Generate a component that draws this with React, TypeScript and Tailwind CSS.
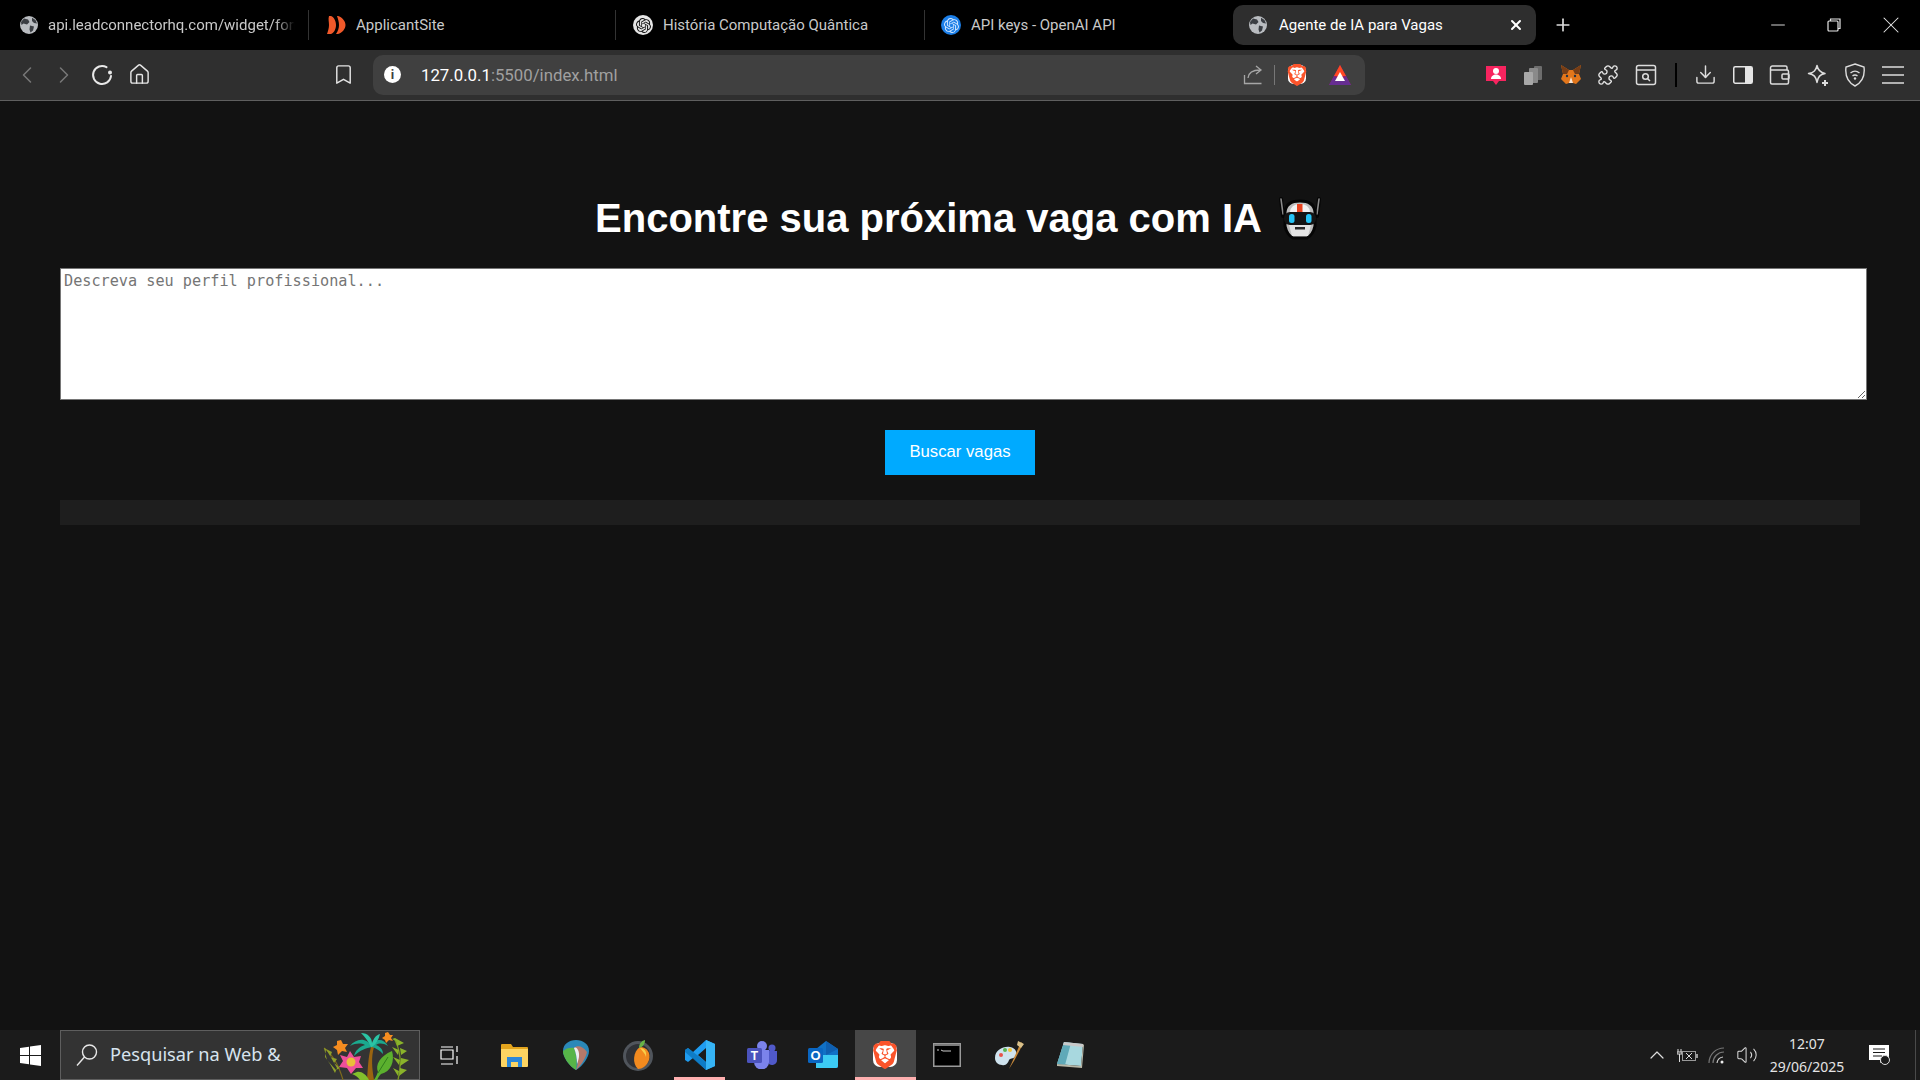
import { ChevronLeft, ChevronRight, Plus, X, Minus, Home, Bookmark, Puzzle, Download, ChevronUp, Volume2 } from "lucide-react";
import { SiBrave, SiOpenai } from "react-icons/si";
import type { ReactNode } from "react";

function Globe({ size = 18 }: { size?: number }) {
  return (
    <svg width={size} height={size} viewBox="0 0 18 18" className="shrink-0">
      <circle cx="9" cy="9" r="9" fill="#b9bcc0" />
      <path d="M4 2.500 8 3.500 9.500 6 7 8.500 3.500 7.500 1.500 9 1 6ZM10 9.500 14 10.500 13 14.500 10.500 16.500 9.500 13.500ZM12 1.800 15.500 4 17 7.500 14 7 12 5Z" fill="#3a3d42" />
    </svg>
  );
}

function BraveLogo({ size = 20 }: { size?: number }) {
  return (
    <span className="relative flex shrink-0 items-center justify-center" style={{ width: size, height: size }}>
      <span className="absolute inset-[8%] rounded-[30%] bg-white" />
      <SiBrave size={size} color="#fb542b" className="relative" />
    </span>
  );
}

function OpenAiRound({ bg, fg }: { bg: string; fg: string }) {
  return (
    <span className="flex h-[20px] w-[20px] shrink-0 items-center justify-center rounded-full" style={{ background: bg }}>
      <SiOpenai size={15} color={fg} />
    </span>
  );
}

function ApplicantLogo() {
  return (
    <svg width="20" height="20" viewBox="0 0 20 20" className="shrink-0">
      <path d="M3 1h2c3 1 5 5 5 9s-2 8-5 9H1c1-3 2-6 2-9S2 4 3 1Z" fill="#f0592a" />
      <path d="M11 1h1c4 1 7.500 5 7.500 9s-3.500 8-7.500 9h-2c2-3 3-6 3-9s-1-6-2-9Z" fill="#f0592a" />
    </svg>
  );
}

function Tab({ w, pl, icon, title, fade }: { w: string; pl: string; icon: ReactNode; title: string; fade?: string }) {
  return (
    <div className={`flex h-[30px] items-center gap-[10px] border-r border-[#333] pr-[13px] ${w} ${pl}`}>
      {icon}
      <span className={`overflow-hidden whitespace-nowrap text-[15px] text-[#c9c9c9] ${fade ?? ""}`}>{title}</span>
    </div>
  );
}

function Cell({ w = "w-[37.500px]", children }: { w?: string; children: ReactNode }) {
  return <div className={`flex h-full shrink-0 items-center justify-center ${w}`}>{children}</div>;
}

function TabBar() {
  return (
    <div className="flex h-[50px] shrink-0 items-center bg-black font-['Roboto',sans-serif]">
      <Tab w="w-[309px]" pl="pl-[20px]" icon={<Globe />} title="api.leadconnectorhq.com/widget/form" fade="[mask-image:linear-gradient(to_right,black_92%,transparent)]" />
      <Tab w="w-[307px]" pl="pl-[17px]" icon={<ApplicantLogo />} title="ApplicantSite" />
      <Tab w="w-[309px]" pl="pl-[17px]" icon={<OpenAiRound bg="#e5e5e5" fg="#111" />} title="História Computação Quântica" />
      <div className="flex h-[30px] w-[308px] items-center gap-[10px] pl-[16px]">
        <OpenAiRound bg="#1c7fe8" fg="#d5e8ff" />
        <span className="whitespace-nowrap text-[15px] text-[#c9c9c9]">API keys - OpenAI API</span>
      </div>
      <div className="flex h-[40px] w-[303px] items-center rounded-[10px] bg-[#2e2e2e] pl-[16px] pr-[12px]">
        <Globe />
        <span className="ml-[12px] flex-1 whitespace-nowrap text-[15px] text-white">Agente de IA para Vagas</span>
        <X size={16} color="#fff" strokeWidth={3} />
      </div>
      <Plus size={20} color="#ddd" strokeWidth={2} className="ml-[17px]" />
      <div className="ml-auto flex h-full items-center">
        <Cell w="w-[57px]"><Minus size={22} color="#e8e8e8" strokeWidth={1} /></Cell>
        <Cell w="w-[56px]">
          <svg width="14" height="14" viewBox="0 0 14 14" fill="none" stroke="#e8e8e8" strokeWidth="1.200">
            <rect x="1" y="3" width="10" height="10" rx="1" />
            <path d="M3.500 3V1h9.500v9.500h-2" />
          </svg>
        </Cell>
        <Cell w="w-[58px]"><X size={28} color="#e8e8e8" strokeWidth={0.9} /></Cell>
      </div>
    </div>
  );
}

function Reload() {
  return (
    <svg width="22" height="22" viewBox="0 0 22 22" fill="none" stroke="#e8e8e8" strokeWidth="2">
      <path d="M15.500 3.200A9 9 0 1 0 20 12" strokeLinecap="round" />
      <circle cx="19" cy="8.500" r="2" fill="#e8e8e8" stroke="none" />
    </svg>
  );
}

function Toolbar() {
  return (
    <div className="flex h-[51px] shrink-0 items-center border-b border-[#5f5f5f] bg-[#2f2f2f] pb-px font-['Roboto',sans-serif]">
      <div className="flex h-full w-[373px] shrink-0 items-center pl-[8px]">
        <Cell><ChevronLeft size={28} color="#777" strokeWidth={1.300} /></Cell>
        <Cell><ChevronRight size={28} color="#777" strokeWidth={1.300} /></Cell>
        <Cell><Reload /></Cell>
        <Cell><Home size={23} color="#e5e5e5" strokeWidth={1.500} /></Cell>
        <Cell w="w-[166px]"><span /></Cell>
        <Cell w="w-[38px]"><Bookmark size={23} color="#e5e5e5" strokeWidth={1.500} /></Cell>
      </div>
      <div className="flex h-[40px] w-[992px] shrink-0 items-center rounded-[10px] bg-[#404040] pl-[11px] pr-[13px]">
        <span className="flex h-[17px] w-[17px] items-center justify-center rounded-full bg-white text-[13px] font-bold text-[#404040]">i</span>
        <span className="ml-[20px] pt-[2px] text-[16.800px] text-white">127.0.0.1<span className="text-[#a0a0a0]">:5500/index.html</span></span>
        <div className="ml-auto flex items-center gap-[11px]">
          <svg width="20" height="20" viewBox="0 0 20 20" fill="none" stroke="#a6a6a6" strokeWidth="1.300">
            <path d="M1.500 10v8.500h17M5 13c.5-5 4-8 12-8M13 1l5 4-5 4" />
          </svg>
          <span className="h-[20px] w-px bg-[#777]" />
          <BraveLogo size={22} />
          <svg width="24" height="22" viewBox="0 0 24 22" className="ml-[9px]">
            <path d="M12 1 23 21H1Z" fill="#9e1f63" />
            <path d="M12 1 18 12H6Z" fill="#ff4724" />
            <path d="M6 12 1 21h22l-5-9-6 5Z" fill="#662d91" />
            <path d="M12 8 17 17H7Z" fill="#fff" />
          </svg>
        </div>
      </div>
      <div className="ml-[112px] flex h-full items-center">
        <Cell>
          <svg width="22" height="22" viewBox="0 0 22 22">
            <path d="M1 2h20v15h-7l-3 4-3-4H1Z" fill="#f7245f" />
            <circle cx="11" cy="7" r="3" fill="#fff" />
            <path d="M6 15c0-6 10-6 10 0Z" fill="#fff" />
          </svg>
        </Cell>
        <Cell>
          <svg width="20" height="20" viewBox="0 0 20 20">
            <rect x="11" y="1" width="8" height="14" rx="1" fill="#6d6d6d" />
            <rect x="6" y="3" width="9" height="15" rx="1" fill="#8a8a8a" />
            <rect x="1" y="7" width="9" height="13" rx="1" fill="#a8a8a8" />
          </svg>
        </Cell>
        <Cell>
          <svg width="22" height="22" viewBox="0 0 22 22">
            <path d="M1 1 9 6h4l8-5-2 9 2 5-5 5-3-1H9l-3 1-5-5 2-5Z" fill="#e2761b" />
            <path d="M1 1 9 6 7 10 3 10ZM21 1 13 6l2 4 4 0Z" fill="#763d16" />
            <path d="M9 19h4l-2-6Z" fill="#f6e4d4" />
            <circle cx="7" cy="12" r="1.200" fill="#233447" />
            <circle cx="15" cy="12" r="1.200" fill="#233447" />
          </svg>
        </Cell>
        <Cell><Puzzle size={22} color="#e5e5e5" strokeWidth={1.500} /></Cell>
        <Cell>
          <svg width="22" height="22" viewBox="0 0 22 22" fill="none" stroke="#ddd" strokeWidth="1.500">
            <rect x="1.500" y="1.500" width="19" height="19" rx="2" />
            <path d="M1.500 6h19" />
            <circle cx="10.500" cy="12.500" r="2.800" />
            <path d="M12.500 14.500 15 17" />
          </svg>
        </Cell>
        <Cell w="w-[22px]"><span className="h-[24px] w-[2px] bg-black" /></Cell>
        <Cell><Download size={23} color="#ddd" strokeWidth={1.500} /></Cell>
        <Cell>
          <svg width="22" height="22" viewBox="0 0 22 22">
            <rect x="1.750" y="2.750" width="18.500" height="16.500" rx="1.500" fill="none" stroke="#e5e5e5" strokeWidth="1.500" />
            <rect x="13" y="3" width="7" height="16" fill="#e5e5e5" />
          </svg>
        </Cell>
        <Cell>
          <svg width="22" height="22" viewBox="0 0 22 22" fill="none" stroke="#ddd" strokeWidth="1.500">
            <path d="M18 6V3.500A1.500 1.500 0 0 0 16.500 2H3.500A2 2 0 0 0 1.500 4v14.500A1.500 1.500 0 0 0 3 20h15a1.500 1.500 0 0 0 1.500-1.500V7.500A1.500 1.500 0 0 0 18 6H2" />
            <rect x="13" y="10" width="7" height="5" rx="1" />
          </svg>
        </Cell>
        <Cell>
          <svg width="24" height="24" viewBox="0 0 24 24" fill="none" stroke="#ddd" strokeWidth="1.500">
            <path d="M11 2.500c1 5 3 7 8 8-5 1-7 3-8 9-1-6-3-8-8.500-9 5.500-1 7.500-3 8.500-8Z" strokeLinejoin="round" />
            <path d="M19 17v6M16 20h6" strokeWidth="2" />
          </svg>
        </Cell>
        <Cell>
          <svg width="22" height="24" viewBox="0 0 22 24" fill="none" stroke="#ddd" strokeWidth="1.400">
            <path d="M11 1 20 4c1 8-1 15-9 19C3 19 1 12 2 4Z" />
            <path d="M6.500 10c3-2.500 6-2.500 9 0M8.500 12.800c2-1.300 3-1.300 5 0" />
            <circle cx="11" cy="15.500" r="1.200" fill="#ddd" stroke="none" />
          </svg>
        </Cell>
        <Cell>
          <svg width="22" height="20" viewBox="0 0 22 20" stroke="#ddd" strokeWidth="1.500">
            <path d="M0 2h22M0 10h22M0 18h22" />
          </svg>
        </Cell>
      </div>
    </div>
  );
}

function RobotEmoji() {
  return (
    <svg width="44" height="44" viewBox="0 0 44 44" className="ml-[16px] shrink-0">
      <path d="M3 3 5 20M41 3 39 20" stroke="#050505" strokeWidth="4" strokeLinecap="round" />
      <path d="M3 3 5 18M41 3 39 18" stroke="#8a8a8a" strokeWidth="1.600" strokeLinecap="round" />
      <path d="M7 16Q8 5 22 5T37 16V30Q35 39 29 42H15Q9 39 7 30Z" fill="#bdbdbd" stroke="#050505" strokeWidth="3" />
      <path d="M12 16Q13 8 22 8T32 16Z" fill="#f2f2f2" />
      <rect x="19" y="8" width="5.500" height="8" fill="#e8431f" />
      <rect x="6" y="16" width="32" height="13" rx="6" fill="#141414" />
      <rect x="11" y="18" width="5.500" height="9" rx="2.500" fill="#25c3f5" />
      <rect x="28" y="18" width="5.500" height="9" rx="2.500" fill="#25c3f5" />
      <path d="M11 29H33L30 40H14Z" fill="#e2e2e2" />
      <rect x="17" y="31" width="10" height="2.500" fill="#2a2a2a" />
    </svg>
  );
}

function TropicalArt() {
  return (
    <svg width="90" height="50" viewBox="0 0 90 50" className="shrink-0">
      <path d="M2 18C10 24 17 36 21 50" stroke="#7d6a1c" strokeWidth="1.200" fill="none" />
      <path d="M2 18 10 22 8 27 15 29 12 33 18 38 14 40 5 30ZM4 19 3 27 8 34 13 43 15 38Z" fill="#8fa12a" />
      <path d="M45 50C46 38 46 28 49 17L52 17C49 28 50 38 52 50Z" fill="#9a6410" />
      <path d="M50 17C45 7 34 8 28 16 34 13 39 13 43 15 37 17 33 21 32 26 38 20 44 18 50 17Z" fill="#1ba98e" />
      <path d="M50 17C53 8 61 8 66 16 61 13 57 13 54 15 59 17 61 20 61 24 57 20 54 18 50 17Z" fill="#1ba98e" />
      <path d="M49 17C46 11 43 7 39 3 46 3 50 8 50 13 52 8 54 5 58 4 57 9 54 14 50 17Z" fill="#2bc4a5" />
      <path d="M35 42C39 41 44 44 47 50H38C36 47 33 45 30 44Z" fill="#82c02c" />
      <path d="M28 21 32 27 39 26 37 32 41 38 34 38 29 44 25 38 17 37 21 31 18 25 25 27Z" fill="#ef4f9a" />
      <circle cx="29" cy="32" r="4.500" fill="#e9bd3a" />
      <path d="M19 10 21 14 26 14 23 18 25 22 20 21 16 25 15 20 11 17 15 15 15 11Z" fill="#f58c20" />
      <path d="M66 2 68 5 71 5 69 8 71 11 67 10 64 13 63 10 60 8 63 6 63 3Z" fill="#f58c20" />
      <path d="M52 50C54 47 55 44 56 42 53 35 58 26 70 21 73 31 69 42 59 44 57 46 56 48 55 50Z" fill="#5bb02e" />
      <path d="M56 43 66 27" stroke="#2f7d1c" strokeWidth="1" />
      <path d="M76 50C79 38 80 24 73 10" stroke="#7a9a22" strokeWidth="1.300" fill="none" />
      <path d="M74 11 70 9 73 8 82 13 75 16ZM77 20 70 17 76 25ZM78 18 85 21 79 25ZM78 30 71 27 77 35ZM79 28 87 30 78 36ZM77 41 71 38 76 46ZM78 38 85 40 77 46Z" fill="#8ab32a" />
    </svg>
  );
}

function Taskbar() {
  return (
    <div className="flex h-[50px] shrink-0 items-stretch bg-[#1b1b1b] font-['Noto_Sans',sans-serif]">
      <div className="flex w-[60px] shrink-0 items-center justify-center">
        <svg width="21" height="21" viewBox="0 0 21 21" fill="#fff">
          <path d="M0 3 9 1.700V10H0ZM10 1.500 21 0V10H10ZM0 11H9V19.300L0 18ZM10 11H21V21L10 19.500Z" />
        </svg>
      </div>
      <div className="flex w-[360px] shrink-0 items-center border border-[#5e5e5e] bg-[#333] pl-[14px] pr-[7px]">
        <svg width="24" height="24" viewBox="0 0 24 24" fill="none" stroke="#e8e8e8" strokeWidth="1.400">
          <circle cx="14.500" cy="9" r="7" />
          <path d="M9.500 14 2 22.500" />
        </svg>
        <span className="ml-[11px] flex-1 text-[18.200px] text-[#d7e3ee]">Pesquisar na Web &amp;</span>
        <TropicalArt />
      </div>
      <div className="flex w-[63.500px] shrink-0 items-center justify-center pr-[3px]">
        <svg width="20" height="20" viewBox="0 0 20 20" fill="none" stroke="#fff" strokeWidth="1.200">
          <path d="M1 2h12M1 19h12M1 5h12v9H1ZM17 1v6M17 11v8" />
        </svg>
      </div>
      <TaskIcon>
        <svg width="27" height="25" viewBox="0 0 27 25">
          <path d="M0 2a1 1 0 0 1 1-1h9l2 3h14a1 1 0 0 1 1 1v2H0Z" fill="#e3a41d" />
          <path d="M0 6h27v17a1 1 0 0 1-1 1H1a1 1 0 0 1-1-1Z" fill="#fcd462" />
          <path d="M6 24V14h15v10h-4v-5h-7v5Z" fill="#2b87d8" />
        </svg>
      </TaskIcon>
      <TaskIcon>
        <svg width="26" height="30" viewBox="0 0 26 30">
          <path d="M13 30C6 26 0 17 0 11 0 4 6 0 13 0s13 4 13 11c0 6-6 15-13 19Z" fill="#2b88b8" />
          <path d="M13 30C6 26 0 17 0 11c3-3 8-4 11-3 3 8 3 16 2 22Z" fill="#57b548" />
          <path d="M13 30C17 27 23 18 24 12 20 6 14 5 11 8c4 6 5 15 2 22Z" fill="#b5796a" />
          <path d="M11 8c2 5 3 10 3 16 2-5 3-10 1-14-1-2-2-3-4-2Z" fill="#eee" />
        </svg>
      </TaskIcon>
      <TaskIcon>
        <svg width="30" height="32" viewBox="0 0 30 32">
          <circle cx="15" cy="17" r="15" fill="#50555c" />
          <circle cx="15" cy="17" r="12" fill="#2f3136" />
          <path d="M17 8C24 8 28 14 26 21 24 27 19 30 15 30 9 25 10 12 17 8Z" fill="#f28a1f" />
          <path d="M17 9C21 9 24 12 23 18 22 14 19 12 17 9Z" fill="#f8cf4a" />
          <path d="M16 9C16 5 18 2 22 1 22 5 20 8 16 9Z" fill="#68b346" />
        </svg>
      </TaskIcon>
      <TaskIcon active="w-[51px]">
        <svg width="30" height="30" viewBox="0 0 30 30">
          <path d="M21 0 30 4V26L21 30 8 18 3 22 0 20V10L3 8 8 12ZM21 8 13 15 21 22Z" fill="#1f9cf0" />
          <path d="M21 0 30 4V26L21 30Z" fill="#36b4f5" />
          <path d="M3 8 21 22V30L0 12V10Z" fill="#0a71b9" opacity=".75" />
        </svg>
      </TaskIcon>
      <TaskIcon>
        <svg width="30" height="28" viewBox="0 0 30 28">
          <circle cx="15" cy="5" r="5" fill="#7b83eb" />
          <circle cx="25" cy="7" r="3.500" fill="#5059c9" />
          <path d="M21 10h9v9a5 5 0 0 1-9 3Z" fill="#5059c9" />
          <path d="M7 9h15v12a7.500 7.500 0 0 1-15 0Z" fill="#7b83eb" />
          <rect x="0" y="7" width="15" height="15" rx="1.500" fill="#4b53bc" />
          <text x="7.500" y="18.500" textAnchor="middle" fontSize="12" fontWeight="700" fill="#fff" fontFamily="Liberation Sans">T</text>
        </svg>
      </TaskIcon>
      <TaskIcon>
        <svg width="30" height="28" viewBox="0 0 30 28">
          <path d="M18 0 30 8V25a2 2 0 0 1-2 2H8V8Z" fill="#1171c6" />
          <path d="M8 14h22v11a2 2 0 0 1-2 2H8Z" fill="#3ccbf4" />
          <path d="M18 0 30 8 18 14Z" fill="#0f5fb0" />
          <rect x="0" y="7" width="15" height="15" rx="1.500" fill="#0a66c2" />
          <text x="7.500" y="19" textAnchor="middle" fontSize="13" fontWeight="700" fill="#fff" fontFamily="Liberation Sans">O</text>
        </svg>
      </TaskIcon>
      <TaskIcon active="w-[61px]" highlight>
        <BraveLogo size={28} />
      </TaskIcon>
      <TaskIcon>
        <svg width="28" height="24" viewBox="0 0 28 24">
          <rect x=".750" y=".750" width="26.500" height="22.500" fill="#000" stroke="#9a9a9a" strokeWidth="1.500" />
          <rect x="1" y="1" width="26" height="2" fill="#7a7a7a" />
          <path d="M4 7h2M8 7l2 1h8" stroke="#ccc" strokeWidth="1" />
        </svg>
      </TaskIcon>
      <TaskIcon>
        <svg width="30" height="30" viewBox="0 0 30 30">
          <path d="M1 18C1 10 9 6 16 7c6 1 8 6 5 10-2 2-5 1-6 3-1 3-3 6-7 5-4 0-7-3-7-7Z" fill="#cfe3ee" />
          <circle cx="7" cy="15" r="2" fill="#e8534a" />
          <circle cx="11" cy="10" r="2" fill="#5ab553" />
          <circle cx="16" cy="10" r="2" fill="#f3c53a" />
          <path d="M27 2 19 20 15 29 20 21 29 4Z" fill="#c8893a" />
          <path d="M24 1 30 4 27 8 23 5Z" fill="#d9c08a" />
        </svg>
      </TaskIcon>
      <TaskIcon>
        <svg width="27" height="28" viewBox="0 0 27 28">
          <path d="M7 1 26 3 24 25 0 23Z" fill="#a8d8df" />
          <path d="M0 23 7 1 14 2 8 24Z" fill="#5fa9b8" />
          <path d="M7 1 26 3 26 6 6 4Z" fill="#c9c9c9" />
          <path d="M24 25 26 3 27 4 25 27 0 25V23Z" fill="#b8b8a8" />
        </svg>
      </TaskIcon>
      <div className="flex-1" />
      <div className="flex shrink-0 items-center text-[#e4e4e4]">
        <Cell w="w-[30px]"><ChevronUp size={24} color="#ddd" strokeWidth={1.200} /></Cell>
        <Cell w="w-[30px]">
          <svg width="21" height="15" viewBox="0 0 21 15" fill="none" stroke="#ddd" strokeWidth="1">
            <path d="M1 1v3M4 1v3M0 4h5v2H0ZM2.500 6v8" />
            <rect x="5.500" y="3.500" width="13" height="9" stroke="#999" />
            <path d="M19 6h2v4h-2Z" fill="#999" stroke="none" />
            <path d="M9 5l6 6M15 5l-6 6" />
          </svg>
        </Cell>
        <Cell w="w-[30px]">
          <svg width="18" height="17" viewBox="0 0 18 17" fill="none" stroke="#777" strokeWidth="1.200">
            <path d="M1 16A15 15 0 0 1 16 1M5 16A11 11 0 0 1 16 5" />
            <path d="M9 16A7 7 0 0 1 15 10" stroke="#ccc" />
            <circle cx="14" cy="15" r="1.500" fill="#eee" stroke="none" />
          </svg>
        </Cell>
        <Cell w="w-[30px]"><Volume2 size={22} color="#ddd" strokeWidth={1.100} /></Cell>
        <div className="flex w-[90px] shrink-0 flex-col items-center text-[14px] leading-[23px]">
          <span>12:07</span>
          <span>29/06/2025</span>
        </div>
        <Cell w="w-[54px]">
          <svg width="21" height="20" viewBox="0 0 21 20">
            <path d="M0 0h20v15H14l-3 3v-3H0Z" fill="#fff" />
            <path d="M4 4h12M4 7.500h12M4 11h9" stroke="#1b1b1b" strokeWidth="1.200" />
            <circle cx="16" cy="15" r="4.500" fill="#1b1b1b" stroke="#ddd" strokeWidth="1" />
          </svg>
        </Cell>
        <div className="ml-[9px] h-full w-[5px] border-l border-[#4a4a4a]" />
      </div>
    </div>
  );
}

function TaskIcon({ children, active, highlight }: { children: ReactNode; active?: string; highlight?: boolean }) {
  return (
    <div className="relative flex w-[61.800px] shrink-0 items-center justify-center">
      {highlight && <span className="absolute inset-y-0 left-[0.400px] w-[61px] bg-[#474747]" />}
      <span className="relative flex items-center justify-center">{children}</span>
      {active && <span className={`absolute bottom-0 h-[3px] bg-[#ffb0b0] ${active}`} />}
    </div>
  );
}

export default function App() {
  return (
    <div className="h-[1088px] w-[1932px] overflow-hidden bg-white">
      <div className="flex h-[1080px] w-[1920px] flex-col">
        <TabBar />
        <Toolbar />
        <main className="flex min-h-0 flex-1 flex-col bg-[#121212] pl-[60px]">
          <div className="mt-[92px] flex h-[50px] w-[1797px] items-center justify-center">
            <h1 className="font-['Liberation_Sans',sans-serif] text-[40px] font-bold leading-none text-white">Encontre sua próxima vaga com IA</h1>
            <RobotEmoji />
          </div>
          <textarea
            className="mt-[25px] block h-[132px] w-[1807px] resize border border-[#767676] bg-white px-[3px] py-[3px] font-['DejaVu_Sans_Mono',monospace] text-[15.200px] leading-[19px] placeholder:text-[#757575]"
            placeholder="Descreva seu perfil profissional..."
          />
          <div className="mt-[30px] flex w-[1800px] justify-center">
            <button className="h-[45px] w-[150px] bg-[#00aaff] pb-[2px] font-['Liberation_Sans',sans-serif] text-[16.700px] text-white">Buscar vagas</button>
          </div>
          <div className="mt-[25px] h-[25px] w-[1800px] bg-[#1e1e1e]" />
        </main>
        <Taskbar />
      </div>
    </div>
  );
}
